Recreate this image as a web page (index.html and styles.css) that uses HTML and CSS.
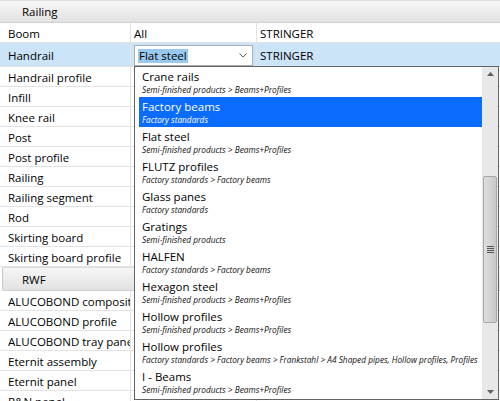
FILE: index.html
```html
<!DOCTYPE html>
<html>
<head>
<meta charset="utf-8">
<link rel="stylesheet" href="styles.css">
</head>
<body>
<div class="grid">
  <div class="section"><span>Railing</span></div>
  <div class="row"><div class="c1">Boom</div><div class="c2">All</div><div class="c3">STRINGER</div></div>
  <div class="row sel">
    <div class="c1">Handrail</div>
    <div class="c2">
      <div class="combo">
        <span class="seltext">Flat steel</span>
        <svg class="arrow" width="8" height="5" viewBox="0 0 8 5"><path d="M0.5 0.5 L4 4 L7.5 0.5" fill="none" stroke="#5a5a5a" stroke-width="1"/></svg>
      </div>
    </div>
    <div class="c3">STRINGER</div>
  </div>
  <div class="row"><div class="c1">Handrail profile</div><div class="c2"></div><div class="c3"></div></div>
  <div class="row"><div class="c1">Infill</div><div class="c2"></div><div class="c3"></div></div>
  <div class="row"><div class="c1">Knee rail</div><div class="c2"></div><div class="c3"></div></div>
  <div class="row"><div class="c1">Post</div><div class="c2"></div><div class="c3"></div></div>
  <div class="row"><div class="c1">Post profile</div><div class="c2"></div><div class="c3"></div></div>
  <div class="row"><div class="c1">Railing</div><div class="c2"></div><div class="c3"></div></div>
  <div class="row"><div class="c1">Railing segment</div><div class="c2"></div><div class="c3"></div></div>
  <div class="row"><div class="c1">Rod</div><div class="c2"></div><div class="c3"></div></div>
  <div class="row"><div class="c1">Skirting board</div><div class="c2"></div><div class="c3"></div></div>
  <div class="row"><div class="c1">Skirting board profile</div><div class="c2"></div><div class="c3"></div></div>
  <div class="section tall"><span>RWF</span></div>
  <div class="row"><div class="c1">ALUCOBOND composite panel</div><div class="c2"></div><div class="c3"></div></div>
  <div class="row"><div class="c1">ALUCOBOND profile</div><div class="c2"></div><div class="c3"></div></div>
  <div class="row"><div class="c1">ALUCOBOND tray panel</div><div class="c2"></div><div class="c3"></div></div>
  <div class="row"><div class="c1">Eternit assembly</div><div class="c2"></div><div class="c3"></div></div>
  <div class="row"><div class="c1">Eternit panel</div><div class="c2"></div><div class="c3"></div></div>
  <div class="row"><div class="c1">R&amp;N panel</div><div class="c2"></div><div class="c3"></div></div>
</div>

<div class="dropdown">
  <div class="list">
    <div class="item"><div class="t">Crane rails</div><div class="s">Semi-finished products &gt; Beams+Profiles</div></div>
    <div class="item hl"><div class="t">Factory beams</div><div class="s">Factory standards</div></div>
    <div class="item"><div class="t">Flat steel</div><div class="s">Semi-finished products &gt; Beams+Profiles</div></div>
    <div class="item"><div class="t">FLUTZ profiles</div><div class="s">Factory standards &gt; Factory beams</div></div>
    <div class="item"><div class="t">Glass panes</div><div class="s">Factory standards</div></div>
    <div class="item"><div class="t">Gratings</div><div class="s">Semi-finished products</div></div>
    <div class="item"><div class="t">HALFEN</div><div class="s">Factory standards &gt; Factory beams</div></div>
    <div class="item"><div class="t">Hexagon steel</div><div class="s">Semi-finished products &gt; Beams+Profiles</div></div>
    <div class="item"><div class="t">Hollow profiles</div><div class="s">Semi-finished products &gt; Beams+Profiles</div></div>
    <div class="item"><div class="t">Hollow profiles</div><div class="s">Factory standards &gt; Factory beams &gt; Frankstahl &gt; A4 Shaped pipes, Hollow profiles, Profiles</div></div>
    <div class="item"><div class="t">I - Beams</div><div class="s">Semi-finished products &gt; Beams+Profiles</div></div>
  </div>
  <div class="scrollbar">
    <svg class="sarrow" width="7" height="4" viewBox="0 0 7 4"><path d="M0 4 L3.5 0 L7 4 Z" fill="#606060"/></svg>
    <div class="track">
      <div class="thumb">
        <div class="grip"><i></i><i></i><i></i><i></i></div>
      </div>
    </div>
    <svg class="sarrow" width="7" height="4" viewBox="0 0 7 4"><path d="M0 0 L3.5 4 L7 0 Z" fill="#606060"/></svg>
  </div>
</div>
</body>
</html>
```

FILE: styles.css
```css
html, body {
  margin: 0;
  padding: 0;
}
body {
  width: 500px;
  height: 401px;
  overflow: hidden;
  position: relative;
  background: #fff;
  font-family: "Segoe UI", "Open Sans", "Noto Sans", sans-serif;
  font-size: 11.5px;
  color: #000;
}
.grid {
  display: flex;
  flex-direction: column;
}
.section {
  height: 23px;
  box-sizing: border-box;
  background: linear-gradient(#f6f6f6, #e2e2e2);
  border-top: 1px solid #dcdcdc;
  border-bottom: 1px solid #d0d0d0;
  display: flex;
  align-items: center;
  padding-left: 22px;
}
.section.tall {
  height: 24px;
  margin-left: 2px;
  padding-left: 19px;
  border-left: 1px solid #c8c8c8;
  border-radius: 2px 0 0 2px;
}
.row {
  display: grid;
  grid-template-columns: 131px 126px 1fr;
  height: 20px;
  box-sizing: border-box;
  border-bottom: 1px solid #e3e3e3;
}
.row > div {
  display: flex;
  align-items: center;
  white-space: nowrap;
  overflow: hidden;
  padding-top: 1px;
}
.c1 {
  padding-left: 8px;
  border-right: 1px solid #e3e3e3;
}
.c2 {
  padding-left: 3px;
  border-right: 1px solid #e3e3e3;
}
.c3 {
  padding-left: 3px;
}
.row.sel {
  height: 24px;
  background: #cce4f7;
}
.combo {
  width: 119px;
  height: 21px;
  box-sizing: border-box;
  border: 1px solid #abadb3;
  background: #fff;
  display: flex;
  align-items: center;
  justify-content: space-between;
  padding: 0 5px 0 3px;
  margin-top: 1px;
}
.seltext {
  background: #99c9ef;
  line-height: 14px;
  padding: 0 1px;
}
.arrow {
  display: block;
}
.dropdown {
  position: absolute;
  left: 134px;
  top: 66px;
  width: 365px;
  height: 334px;
  box-sizing: border-box;
  border: 1px solid #646464;
  background: #fff;
  display: flex;
}
.list {
  flex: 1;
  padding-left: 4px;
  overflow: hidden;
}
.item {
  height: 30px;
  box-sizing: border-box;
  padding: 2px 0 0 3px;
  white-space: nowrap;
}
.item .t {
  font-size: 11.5px;
  line-height: 15px;
}
.item .s {
  font-size: 8.3px;
  font-style: italic;
  line-height: 12px;
  color: #111;
}
.item.hl {
  background: #0a6cff;
  color: #fff;
}
.item.hl .s {
  color: #fff;
}
.scrollbar {
  width: 16px;
  background: #e8e8e8;
  display: flex;
  flex-direction: column;
  align-items: center;
  padding: 5px 0 5px;
  box-sizing: border-box;
}
.sarrow {
  display: block;
  flex: none;
}
.track {
  flex: 1;
  width: 100%;
  display: flex;
  flex-direction: column;
  padding: 100px 1px 0;
  box-sizing: border-box;
}
.thumb {
  height: 147px;
  box-sizing: border-box;
  border: 1px solid #a8a8a8;
  border-radius: 2px;
  background: linear-gradient(90deg, #dedede, #d2d2d2 60%, #c9c9c9);
  display: flex;
  align-items: center;
  justify-content: center;
}
.grip {
  display: flex;
  flex-direction: column;
  gap: 1px;
}
.grip i {
  display: block;
  width: 7px;
  height: 1px;
  background: #555;
}
```
